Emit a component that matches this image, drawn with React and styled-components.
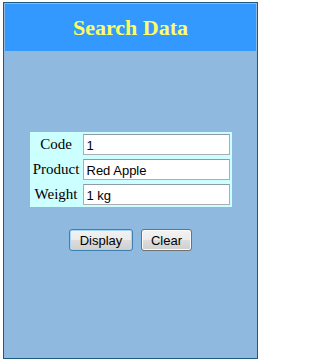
import React, { useState } from "react";
import styled, { createGlobalStyle } from "styled-components";

const GlobalStyle = createGlobalStyle`
  html, body {
    margin: 0;
    padding: 0;
    background: #ffffff;
  }
`;

const Page = styled.div`
  padding: 2px 0 0 3px;
`;

const Frame = styled.div`
  box-sizing: border-box;
  width: 255px;
  height: 357px;
  border: 1px solid #1d5c7c;
  background: #8fb9de;
  padding: 1px;
  display: flex;
  flex-direction: column;
  align-items: center;
`;

const Header = styled.div`
  align-self: stretch;
  height: 47px;
  background: #3399ff;
  display: flex;
  align-items: center;
  justify-content: center;
`;

const Title = styled.h2`
  margin: 0;
  font-family: "Liberation Serif", "Times New Roman", serif;
  font-size: 22px;
  font-weight: bold;
  color: #ffff66;
`;

const Form = styled.div`
  margin-top: 81px;
  display: grid;
  grid-template-columns: 49px 147px;
  column-gap: 2px;
  row-gap: 4px;
  padding: 2px;
  background: #ccffff;
`;

const Label = styled.label`
  font-family: "Liberation Serif", "Times New Roman", serif;
  font-size: 15px;
  color: #000;
  display: flex;
  align-items: center;
  justify-content: center;
  white-space: nowrap;
`;

const Field = styled.input`
  box-sizing: border-box;
  width: 147px;
  height: 21px;
  margin: 0;
  padding: 1px 3px 0;
  border: 1px solid #abadb3;
  border-top-color: #8e9aa6;
  background: #fff;
  font-family: "Liberation Sans", Arial, sans-serif;
  font-size: 13px;
  color: #000;
  outline: none;
`;

const Actions = styled.div`
  margin-top: 22px;
  display: flex;
  gap: 8px;
`;

const Button = styled.button`
  box-sizing: border-box;
  width: ${props => props.w}px;
  height: 22px;
  margin: 0;
  padding: 0;
  border: 1px solid ${props => (props.primary ? "#3c7fb1" : "#707070")};
  border-radius: 3px;
  background: linear-gradient(#f2f2f2 0%, #ebebeb 50%, #dddddd 51%, #cfcfcf 100%);
  box-shadow: ${props => (props.primary ? "inset 0 0 0 1px #a6d8f5" : "inset 0 0 0 1px #fbfbfb")};
  font-family: "Liberation Sans", Arial, sans-serif;
  font-size: 13px;
  color: #000;
  cursor: pointer;
`;

const fields = [
  { key: "code", label: "Code", value: "1" },
  { key: "product", label: "Product", value: "Red Apple" },
  { key: "weight", label: "Weight", value: "1 kg" },
];

export default function App() {
  const [data, setData] = useState(
    Object.fromEntries(fields.map(f => [f.key, f.value]))
  );

  return (
    <Page>
      <GlobalStyle />
      <Frame>
        <Header>
          <Title>Search Data</Title>
        </Header>
        <Form>
          {fields.map(f => (
            <React.Fragment key={f.key}>
              <Label htmlFor={f.key}>{f.label}</Label>
              <Field
                id={f.key}
                value={data[f.key]}
                onChange={e => setData({ ...data, [f.key]: e.target.value })}
              />
            </React.Fragment>
          ))}
        </Form>
        <Actions>
          <Button primary w={64}>Display</Button>
          <Button w={51} onClick={() => setData({ code: "", product: "", weight: "" })}>
            Clear
          </Button>
        </Actions>
      </Frame>
    </Page>
  );
}
